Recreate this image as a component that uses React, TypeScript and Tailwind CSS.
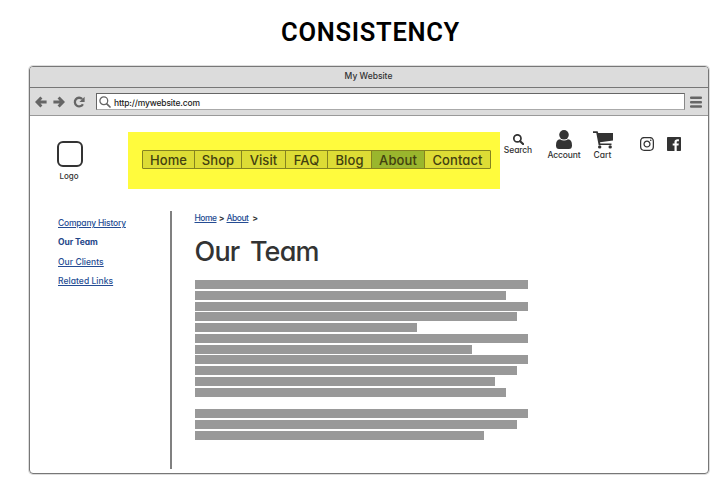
import React from "react";
import { FaInstagram } from "react-icons/fa";

const nav = [
  { label: "Home", width: "w-[52px]" },
  { label: "Shop", width: "w-[47px]" },
  { label: "Visit", width: "w-[44px]" },
  { label: "FAQ", width: "w-[42px]" },
  { label: "Blog", width: "w-[44px]" },
  { label: "About", width: "w-[53px]" },
  { label: "Contact", width: "w-[65px]" },
];

const lines = [
  "w-[333.5px]", "w-[311px]", "w-[333.5px]", "w-[322.5px]", "w-[222.5px]", "w-[333.5px]", "w-[277.5px]",
  "w-[333.5px]", "w-[322.5px]", "w-[300px]", "w-[311px]", "w-0", "w-[333.5px]", "w-[322.5px]", "w-[289px]",
];

function Magnifier({ className, stroke }: { className: string; stroke: number }) {
  return (
    <svg viewBox="0 0 12 12" className={className} fill="none" stroke="currentColor" strokeWidth={stroke} strokeLinecap="round">
      <circle cx="4.8" cy="4.8" r="3.9" />
      <path d="M7.8 7.8 11 11" strokeWidth={stroke + 0.4} />
    </svg>
  );
}

function Arrow({ className }: { className: string }) {
  return (
    <svg viewBox="0 0 12 12" className={className} fill="none" stroke="currentColor" strokeWidth="2.9">
      <path d="M6.4 1.5 2 6l4.400 4.500M2.300 6H11.600" />
    </svg>
  );
}

function Browser() {
  return (
    <header className="shrink-0 bg-[#dcdcdc] text-[#666]">
      <div className="flex h-[21px] items-center justify-center border-b border-[#777] pb-px text-[8.5px] leading-none text-[#333]">
        <span className="-ml-px">My Website</span>
      </div>
      <div className="flex h-[28px] items-center border-b border-[#999] pr-[6px] pl-[5px]">
        <Arrow className="size-[12px]" />
        <Arrow className="ml-[6px] size-[12px] rotate-180" />
        <svg viewBox="0 0 12 12" className="ml-[8px] size-[12px]" fill="none" stroke="currentColor" strokeWidth="2.3">
          <path d="M9.900 8.200A4.300 4.300 0 1 1 9.200 3" />
          <path d="M11.600.7v5.200H6.400z" fill="currentColor" stroke="none" />
        </svg>
        <div className="ml-[11px] flex h-[17px] flex-1 items-center border border-t-[#666] border-r-[#888] border-b-[#aaa] border-l-[#666] bg-white pl-[2px]">
          <Magnifier className="size-[12px]" stroke={1.3} />
          <span className="ml-[3px] pt-[3px] text-[8.5px] leading-none tracking-[-0.15px] text-[#222]">http://mywebsite.com</span>
        </div>
        <svg viewBox="0 0 12 12" className="mt-px ml-[5px] size-[12px]" fill="currentColor">
          <rect y=".6" width="12" height="2.500" rx="1" />
          <rect y="4.900" width="12" height="2.500" rx="1" />
          <rect y="9.200" width="12" height="2.500" rx="1" />
        </svg>
      </div>
    </header>
  );
}

function SiteHeader() {
  return (
    <div className="flex h-[73px] items-start pt-[16px] text-[8.5px] leading-[10px] text-[#333]">
      <div className="mt-[9px] ml-[26.5px] flex w-[26px] flex-col items-center">
        <div className="size-[26px] rounded-[6px] border-2 border-[#333]" />
        <span className="mt-[4px] -ml-px text-[8px]">Logo</span>
      </div>
      <div className="ml-[45.5px] flex h-[57px] w-[372px] bg-[#fffb3d] pt-[18px] pl-[14px]">
        <nav className="flex h-[19px] rounded-[1px] border border-[#85831f] bg-[#dddc35] text-[13px] leading-[18px] tracking-[0.1px] text-[#42400f]">
          {nav.map(({ label, width }, i) => (
            <a
              key={label}
              className={`flex shrink-0 justify-center ${width} ${i < 6 ? "border-r border-[#85831f]" : ""} ${label === "About" ? "bg-[#9ab62d]" : ""}`}
            >
              {label}
            </a>
          ))}
        </nav>
      </div>
      <div className="mt-[2px] ml-[3px] flex w-[30px] flex-col items-center">
        <Magnifier className="size-[11px]" stroke={1.9} />
        <span className="tracking-[-0.1px]">Search</span>
      </div>
      <div className="ml-[14px] flex w-[34px] flex-col items-center">
        <svg viewBox="0 0 16 19" className="-mt-[2px] h-[19px] w-[16px]" fill="currentColor">
          <circle cx="8" cy="4.800" r="4.800" />
          <path d="M4 9.200C1.200 9.400 0 11.500 0 15.400 0 17.600 1.100 19 3 19h10c1.900 0 3-1.400 3-3.600 0-3.900-1.200-6-4-6.200-2.300 1.700-5.700 1.700-8 0z" />
        </svg>
        <span className="mt-px tracking-[-0.15px]">Account</span>
      </div>
      <div className="ml-[9px] flex w-[25px] flex-col items-center">
        <svg viewBox="0 0 20 18" className="-mt-px h-[18px] w-[20px]" fill="currentColor">
          <path d="M0 .2h4.600L5.200 2H20v7.400L7 11.200l.3 1.300h11.200V14H5.600L3.300 2H0z" />
          <circle cx="6.700" cy="15.900" r="1.700" />
          <circle cx="17.200" cy="15.900" r="1.700" />
        </svg>
        <span className="mt-px">Cart</span>
      </div>
      <FaInstagram className="mt-[4px] ml-[24px] size-[16px]" />
      <svg viewBox="0 0 14 14" className="mt-[5px] ml-[12px] size-[14px]" fill="currentColor">
        <path fillRule="evenodd" d="M.8 0h12.400q.8 0 .8.800v12.400q0 .8-.8.800H9.700V8.600h1.800l.3-2.100H9.700V5.200c0-.6.200-1 1.100-1h1.100V2.300C9.300 1.900 7.500 2.700 7.500 4.800v1.700H5.700v2.100h1.800V14H.8Q0 14 0 13.200V.8Q0 0 .8 0z" />
      </svg>
    </div>
  );
}

export default function App() {
  return (
    <div className="flex h-[488px] w-[725px] flex-col bg-white font-['Inter','Liberation_Sans',sans-serif] font-medium [font-feature-settings:'cv11']">
      <h1 className="flex h-[66px] shrink-0 items-center justify-center pl-[16px] font-['Roboto',sans-serif] text-[25.5px] leading-none font-semibold tracking-[0.7px] text-black">
        CONSISTENCY
      </h1>
      <main className="ml-[29px] flex h-[408px] w-[680px] flex-col overflow-hidden rounded-[4px] border-[1.5px] border-[#777] ring-1 ring-[#ddd]">
        <Browser />
        <SiteHeader />
        <div className="flex min-h-0 flex-1 pt-[22px] pb-[4px]">
          <aside className="flex w-[142px] shrink-0 flex-col items-start border-r-2 border-[#808080] pt-[3px] pl-[28px] text-[8.5px] leading-[19.3px] tracking-[-0.2px] text-[#254c93]">
            <a className="underline">Company History</a>
            <a className="font-bold tracking-[-0.1px] text-[#1f4789]">Our Team</a>
            <a className="tracking-[0.05px] underline">Our Clients</a>
            <a className="tracking-[0.05px] underline">Related Links</a>
          </aside>
          <article className="flex flex-col pl-[22.5px]">
            <div className="flex text-[8.5px] leading-[14px] tracking-[-0.5px] text-[#333]">
              <a className="w-[21px] text-[#254c93] underline">Home</a>
              <span className="w-[11px] pl-px text-center font-bold">&gt;</span>
              <a className="w-[22px] text-[#254c93] underline">About</a>
              <span className="w-[13px] text-center font-bold">&gt;</span>
            </div>
            <h2 className="mt-[11px] text-[27px] leading-[32px] tracking-[-0.8px] text-[#333] [word-spacing:4px]">Our Team</h2>
            <div className="mt-[12px] flex flex-col gap-[1.75px]">
              {lines.map((width, i) => (
                <div key={i} className={`h-[9px] bg-[#999] ${width}`} />
              ))}
            </div>
          </article>
        </div>
      </main>
    </div>
  );
}
